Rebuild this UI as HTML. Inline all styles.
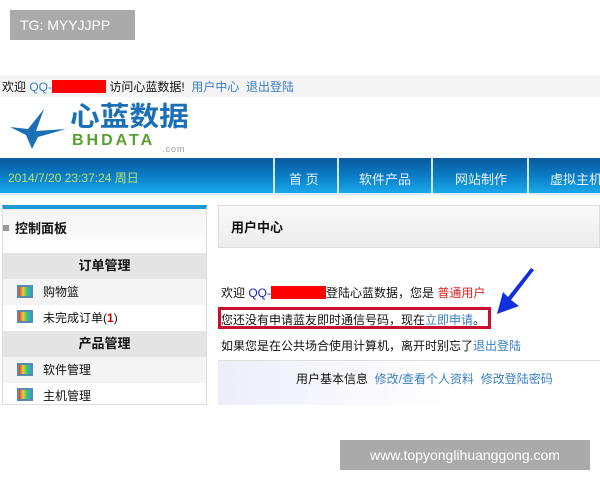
<!DOCTYPE html><html><head><meta charset="utf-8"><style>
*{margin:0;padding:0;box-sizing:border-box}
body{width:600px;height:480px;background:#fff;position:relative;overflow:hidden;font-family:"Liberation Sans","Noto Sans CJK SC",sans-serif;font-size:12px;color:#111}
.a{position:absolute;white-space:nowrap}
.blue{color:#3a7fc4}
.red{background:#f00;display:inline-block;height:13px;vertical-align:-2px}
.nav{left:0;top:158px;width:600px;height:37px;background:linear-gradient(#0b5a9a,#0a7cc6 50%,#1aa8ea);border-bottom:2px solid #d8eefa;overflow:hidden}
.nav span{position:absolute;top:11px;color:#e8f4ff;font-size:13px;white-space:nowrap}
.sep{position:absolute;top:0;width:2px;height:37px;background:#cfe6f5}
.side{left:2px;top:205px;width:205px;height:200px;border:1px solid #ddd;border-top:4px solid #1e96d8;overflow:hidden}
.ic{position:absolute;left:14px;width:16px;height:13px;border:2px solid #5a8ab0;background:linear-gradient(90deg,#e33,#ec3,#3c6,#39e)}
</style></head><body>
<div class="a" style="left:10px;top:10px;width:125px;height:30px;background:#aaa;color:#fff;font-size:14px;line-height:30px;padding-left:10px">TG: MYYJJPP</div>
<div class="a" style="left:0;top:75px;width:600px;height:22px;background:#f4f4f4"></div>
<div class="a" style="left:2px;top:78px;font-size:12px">欢迎 <span class="blue">QQ-</span><span class="red" style="width:54px"></span> 访问心蓝数据! &nbsp;<span class="blue">用户中心</span> &nbsp;<span class="blue">退出登陆</span></div>
<svg class="a" style="left:8px;top:105px" width="60" height="45" viewBox="0 0 60 45"><path d="M36 4 L28 26 L58 24 L30 32 L24 44 L18 30 L2 22 L20 24 Z" fill="#1a6fb5"/></svg>
<div class="a" style="left:70px;top:102px;font-size:27px;font-weight:bold;color:#1a6fb5;line-height:30px;transform:scaleX(1.1);transform-origin:left">心蓝数据</div>
<div class="a" style="left:72px;top:132px;font-size:16px;font-weight:bold;color:#5aa030;letter-spacing:3px">BHDATA</div>
<div class="a" style="left:162px;top:144px;font-size:9px;color:#999;letter-spacing:1px">.com</div>
<div class="a nav">
<span style="left:8px;color:#b8e070;font-size:12px">2014/7/20 23:37:24 周日</span>
<div class="sep" style="left:273px"></div><span style="left:289px">首 页</span>
<div class="sep" style="left:337px"></div><span style="left:359px">软件产品</span>
<div class="sep" style="left:431px"></div><span style="left:455px">网站制作</span>
<div class="sep" style="left:527px"></div><span style="left:550px">虚拟主机</span>
</div>
<div class="a side">
<div style="height:44px;background:linear-gradient(#f4f4f4,#fff);font-weight:bold;font-size:13px;line-height:40px;padding-left:12px;position:relative"><span style="position:absolute;left:0;top:16px;width:6px;height:6px;background:#999"></span>控制面板</div>
<div style="height:26px;background:#e4e4e4;text-align:center;font-weight:bold;font-size:13px;line-height:26px">订单管理</div>
<div style="height:26px;background:#f4f4f4;position:relative;line-height:26px;padding-left:40px"><i class="ic" style="top:6px"></i>购物篮</div>
<div style="height:26px;position:relative;line-height:26px;padding-left:40px"><i class="ic" style="top:5px"></i>未完成订单(<b style="color:#c00">1</b>)</div>
<div style="height:26px;background:#e4e4e4;text-align:center;font-weight:bold;font-size:13px;line-height:26px">产品管理</div>
<div style="height:26px;background:#f4f4f4;position:relative;line-height:26px;padding-left:40px"><i class="ic" style="top:6px"></i>软件管理</div>
<div style="height:26px;position:relative;line-height:26px;padding-left:40px"><i class="ic" style="top:5px"></i>主机管理</div>
</div>
<div class="a" style="left:218px;top:205px;width:382px;height:43px;background:linear-gradient(#fafafa,#ececec);border:1px solid #ddd;font-weight:bold;font-size:13px;line-height:43px;padding-left:12px">用户中心</div>
<div class="a" style="left:221px;top:284px">欢迎 <span style="color:#22a">QQ-</span><span class="red" style="width:55px"></span>登陆心蓝数据，您是 <span style="color:#d22">普通用户</span></div>
<div class="a" style="left:218px;top:307px;width:273px;height:22px;border:3px solid #c8102e"></div>
<div class="a" style="left:221px;top:311px">您还没有申请蓝友即时通信号码，现在<span class="blue">立即申请</span>。</div>
<div class="a" style="left:221px;top:337px">如果您是在公共场合使用计算机，离开时别忘了<span class="blue">退出登陆</span></div>
<div class="a" style="left:218px;top:360px;width:382px;height:45px;background:linear-gradient(90deg,#eeeefa,#fff 60%);border-top:1px solid #ddd"></div>
<div class="a" style="left:296px;top:370px">用户基本信息 &nbsp;<span class="blue">修改/查看个人资料</span> &nbsp;<span class="blue">修改登陆密码</span></div>
<svg class="a" style="left:495px;top:268px" width="45" height="50" viewBox="0 0 45 50"><path d="M39 2 L16 32 L24 38 L2 46 L8 24 L13 29 L36 0 Z" fill="#1030e0"/></svg>
<div class="a" style="left:340px;top:440px;width:250px;height:30px;background:#aaa;color:#fff;font-size:14px;line-height:30px;text-align:center">www.topyonglihuanggong.com</div>
</body></html>
